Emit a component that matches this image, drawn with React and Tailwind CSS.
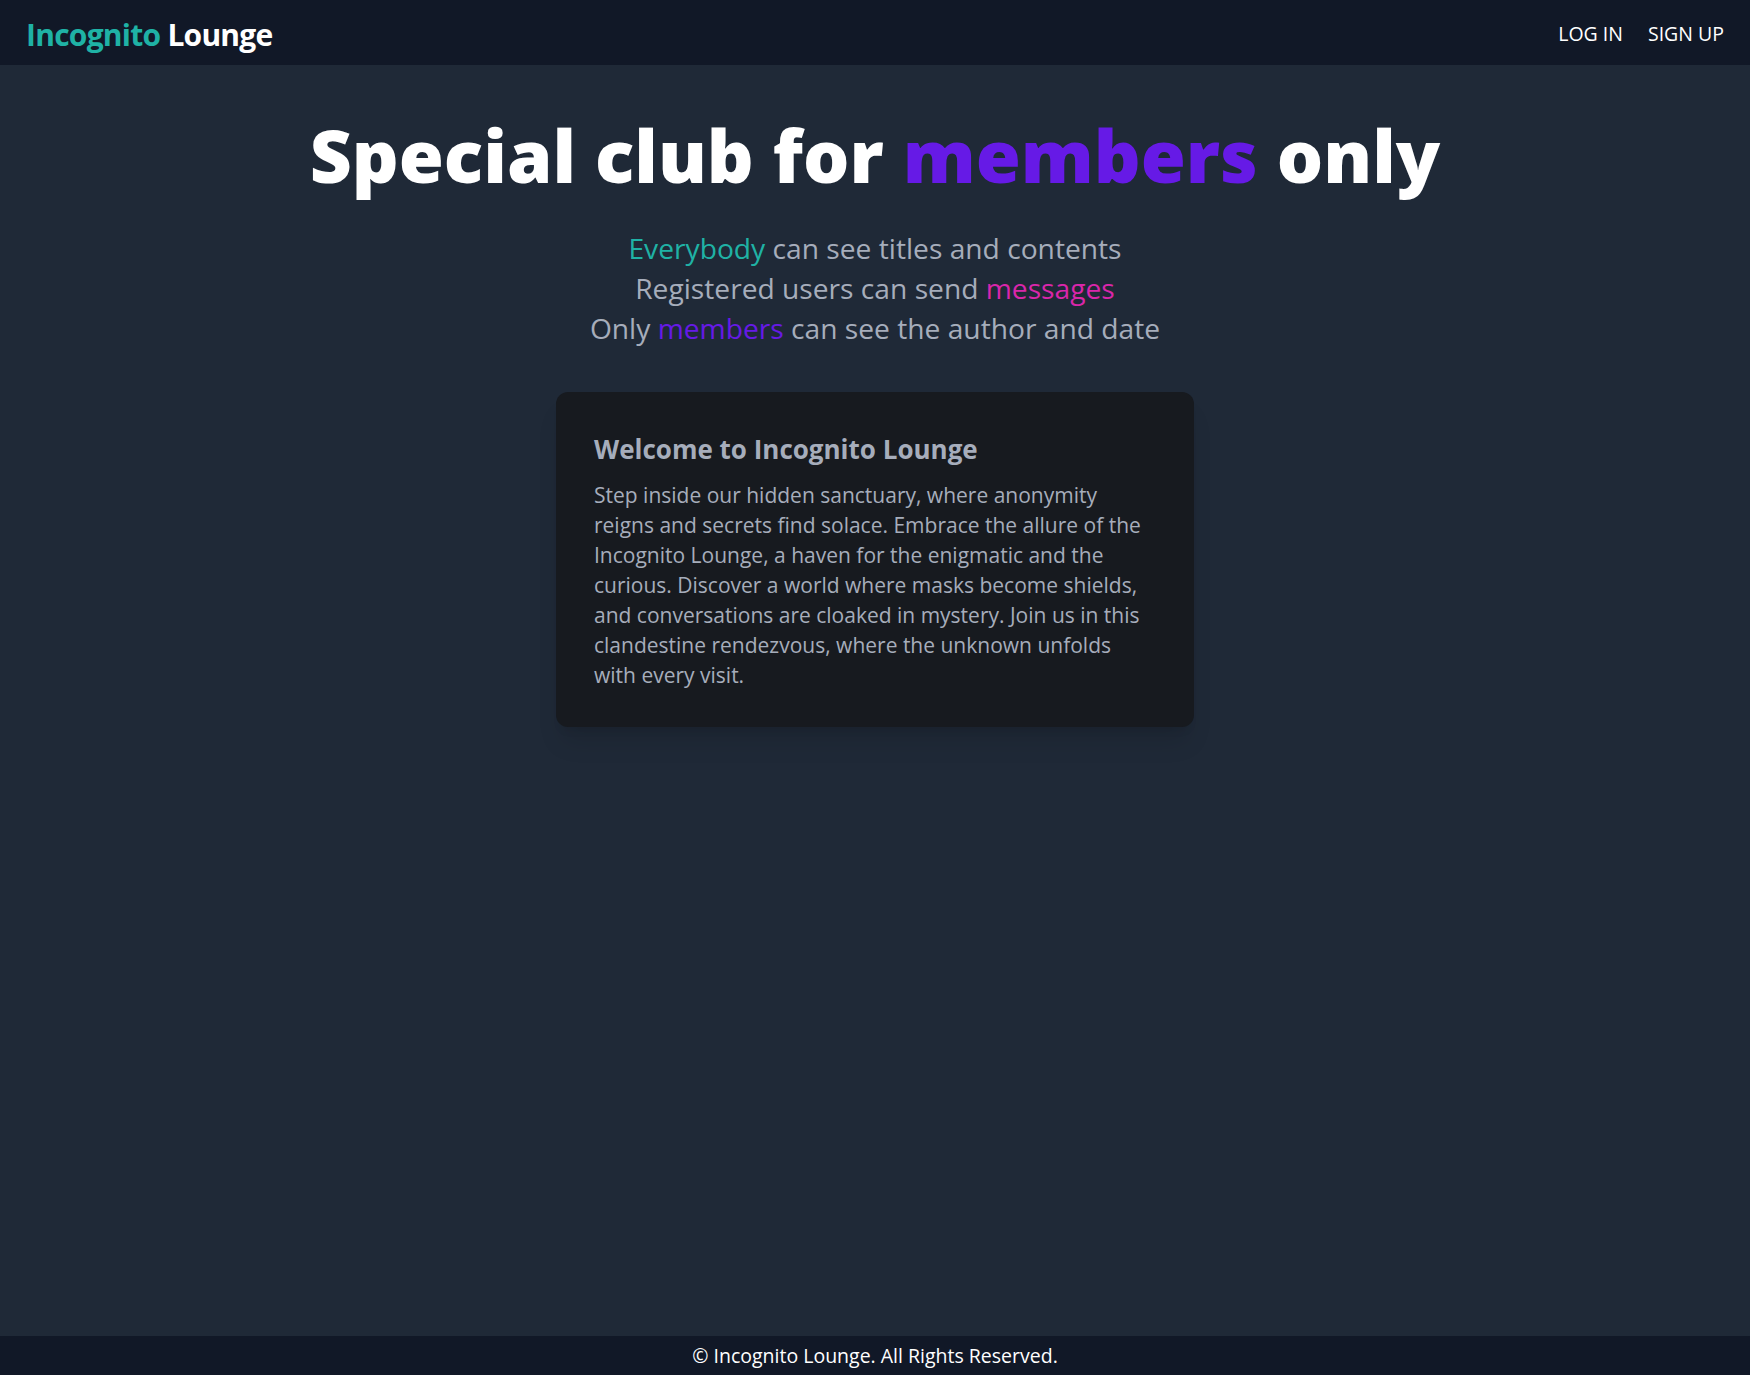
const App = () => {
  return (
    <div className="min-h-screen flex flex-col bg-[#1f2937] font-['Open_Sans',sans-serif]">
      {/* NAVBAR */}
      <header className="h-[65px] shrink-0 bg-[#111827] flex items-center justify-between px-[26px]">
        <a href="#" className="pt-[3px] text-[30px] font-bold tracking-tight">
          <span className="text-[#1fb2a5]">Incognito</span>{" "}
          <span className="text-white">Lounge</span>
        </a>
        <nav className="flex items-center gap-[25px] pt-[2px] text-[19.5px] text-white">
          <a href="#">LOG IN</a>
          <a href="#">SIGN UP</a>
        </nav>
      </header>

      <main className="flex-1 flex flex-col items-center">
        {/* HERO */}
        <h1 className="mt-[53px] text-[73px] leading-none font-extrabold text-white">
          Special club for <span className="text-[#661ae6]">members</span> only
        </h1>
        <p className="mt-[37px] text-[28.2px] leading-[40px] text-center text-[#a6adbb]">
          <span className="text-[#1fb2a5]">Everybody</span> can see titles and contents
          <br />
          Registered users can send <span className="text-[#d926aa]">messages</span>
          <br />
          Only <span className="text-[#661ae6]">members</span> can see the author and date
        </p>

        {/* WELCOME CARD */}
        <div className="mt-[44px] w-[638px] rounded-xl bg-[#171a1f] shadow-xl px-[38px] pt-[41px] pb-[37px]">
          <h2 className="text-[26px] leading-8 font-bold text-[#a6adbb]">Welcome to Incognito Lounge</h2>
          <p className="mt-[15px] text-[21px] leading-[30px] text-[#a6adbb]">
            Step inside our hidden sanctuary, where anonymity reigns and secrets find solace. Embrace the
            allure of the Incognito Lounge, a haven for the enigmatic and the curious. Discover a world where
            masks become shields, and conversations are cloaked in mystery. Join us in this clandestine
            rendezvous, where the unknown unfolds with every visit.
          </p>
        </div>
      </main>

      {/* FOOTER */}
      <footer className="h-[39px] shrink-0 bg-[#111827] flex items-center justify-center text-[19.5px] text-white">
        © Incognito Lounge. All Rights Reserved.
      </footer>
    </div>
  );
};

export default App;
